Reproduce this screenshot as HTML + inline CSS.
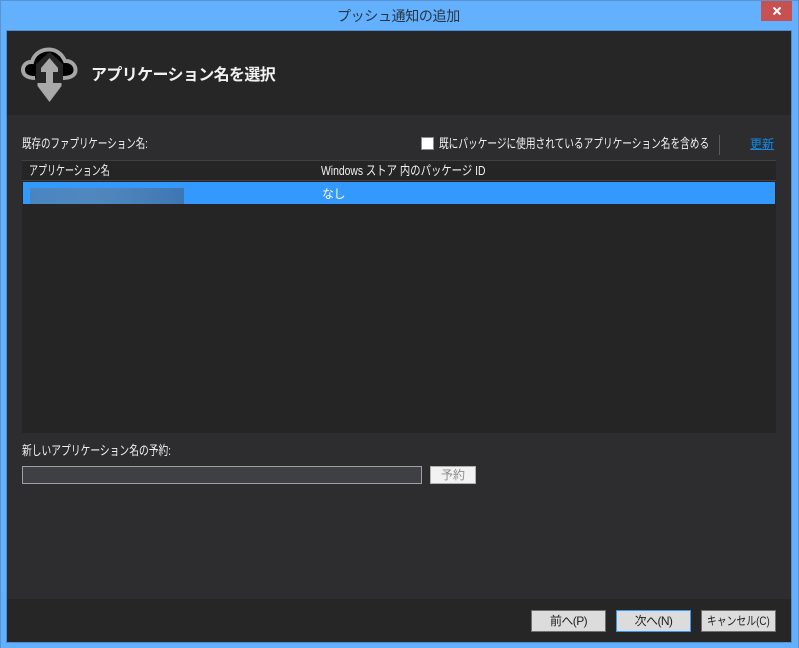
<!DOCTYPE html>
<html><head><meta charset="utf-8">
<style>
html,body{margin:0;padding:0;width:799px;height:648px;overflow:hidden;background:#63b0ff}
body{position:relative;font-family:"Liberation Sans","Noto Sans CJK JP",sans-serif;font-size:12px;color:#f1f1f1}
.a{position:absolute;box-sizing:border-box}
.t{position:absolute;white-space:nowrap;line-height:16px;transform-origin:0 50%}
.s{font-size:13px}
.btn{position:absolute;top:610px;height:22px;background:#dcdcdc;border:1px solid #707070;box-sizing:border-box;color:#1e1e1e;text-align:center;line-height:20px;font-size:12px;letter-spacing:-.6px}
.btn span{display:inline-block}
</style></head>
<body>
<div class="a" style="left:0;top:0;width:799px;height:648px;border:1px solid #5b93cf;border-bottom:0"></div>
<div class="t" style="left:337px;top:7px;font-size:14px;line-height:18px;color:#2a3440;letter-spacing:-.35px">プッシュ通知の追加</div>
<div class="a" style="left:761px;top:1px;width:31px;height:20px;background:#c75050"></div>
<svg class="a" style="left:773px;top:7px" width="8" height="8"><path d="M.5 .5L7.500 7.500M7.500 .5L.5 7.500" stroke="#fff" stroke-width="2"/></svg>
<div class="a" style="left:6px;top:30px;width:786px;height:613px;border:1px solid #4f8fd0;background:#2d2d30"></div>
<div class="a" style="left:7px;top:31px;width:784px;height:84px;background:#262626"></div>
<div class="a" style="left:7px;top:599px;width:784px;height:43px;background:#262626"></div>

<svg class="a" style="left:0;top:0" width="100" height="110">
<path d="M35 78C27 78 23 74.500 23 70C23 65 27 61.500 32 62C34 54 41 49.500 49 49.500C56 49.500 62 54 65 61C71 60.500 75.500 65 75.500 70C75.500 75 71 78 63 78Z" fill="#000"/>
<path d="M35 78C27 78 23 74.500 23 70C23 65 27 61.500 32 62C34 54 41 49.500 49 49.500C56 49.500 62 54 65 61C71 60.500 75.500 65 75.500 70C75.500 75 71 78 63 78" fill="none" stroke="#a6a6a6" stroke-width="4"/>
<path d="M49.500 52L36 64V80H63V64Z" fill="#262626"/>
<path d="M49.500 58L41 68V72H46V83H37.500V86L49.500 102L61.500 86V83H53V72H58V68Z" fill="#a9a9a9"/>
</svg>
<div class="t" style="left:91px;top:65px;font-size:16px;line-height:22px;font-weight:700;color:#f1f1f1;letter-spacing:-.63px">アプリケーション名を選択</div>

<div class="t s" style="left:22px;top:136px;transform:scaleX(.73)">既存のファプリケーション名:</div>
<div class="a" style="left:421px;top:137px;width:13px;height:13px;background:#fff;border:1px solid #8a8a8a"></div>
<div class="t s" style="left:439px;top:136px;transform:scaleX(.744)">既にパッケージに使用されているアプリケーション名を含める</div>
<div class="a" style="left:719px;top:135px;width:1px;height:20px;background:#5a5a5c"></div>
<div class="t" style="left:750px;top:136px;color:#0e8be8;text-decoration:underline">更新</div>

<div class="a" style="left:22px;top:160px;width:754px;height:273px;background:#252526"></div>
<div class="a" style="left:22px;top:160px;width:754px;height:1px;background:#3f3f41"></div>
<div class="a" style="left:22px;top:180px;width:754px;height:1px;background:#3f3f41"></div>
<div class="t s" style="left:29px;top:163px;transform:scaleX(.692)">アプリケーション名</div>
<div class="t s" style="left:321px;top:163px;transform:scaleX(.797)">Windows ストア 内のパッケージ ID</div>
<div class="a" style="left:23px;top:182px;width:752px;height:22px;background:#3399ff"></div>
<div class="a" style="left:30px;top:188px;width:154px;height:16px;background:linear-gradient(90deg,#4a85c2,#5088bd 40%,#4a80b8 70%,#3c76b4)"></div>
<div class="t" style="left:322px;top:186px;color:#fff;letter-spacing:-.5px">なし</div>

<div class="t s" style="left:22px;top:443px;transform:scaleX(.751)">新しいアプリケーション名の予約:</div>
<div class="a" style="left:22px;top:466px;width:400px;height:18px;background:#3f3f46;border:1px solid #a0a0a0"></div>
<div class="a" style="left:430px;top:466px;width:46px;height:18px;background:#f2f2f2;border:1px solid #b0b0b0;color:#8a8a8a;text-align:center;line-height:16px">予約</div>

<div class="btn" style="left:531px;width:75px">前へ(P)</div>
<div class="btn" style="left:616px;width:75px;border-color:#3399ff">次へ(N)</div>
<div class="btn" style="left:701px;width:75px;letter-spacing:0"><span style="transform:scaleX(.82);white-space:nowrap;margin:0 -20px">キャンセル(C)</span></div>
</body></html>
